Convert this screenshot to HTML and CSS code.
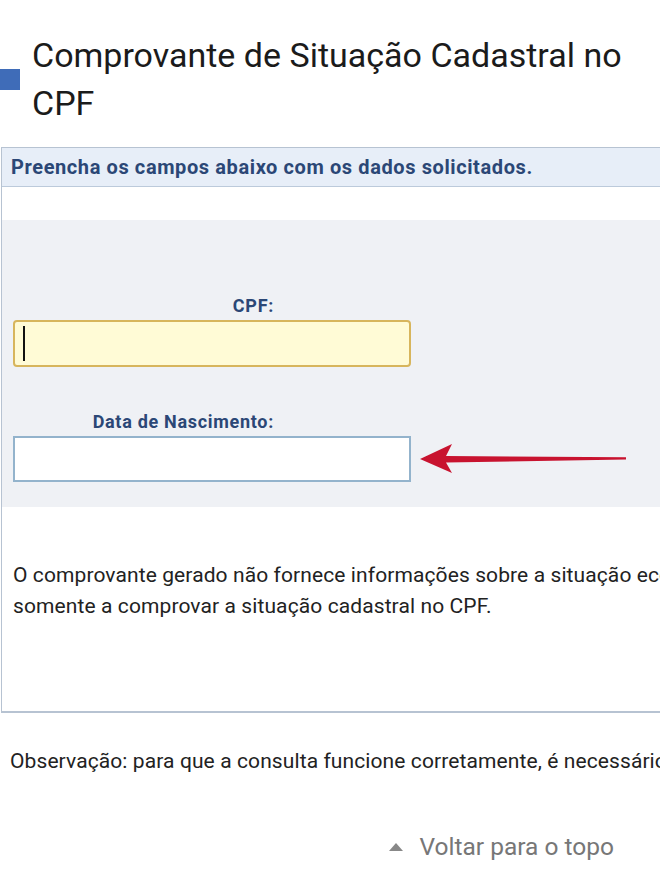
FILE: index.html
```html
<!DOCTYPE html>
<html lang="pt-BR">
<head>
    <meta charset="UTF-8">
    <meta name="viewport" content="width=device-width, initial-scale=1.0">
    <title>Comprovante de Situação Cadastral no CPF</title>
    <link rel="stylesheet" href="styles.css">
</head>
<body>

    <!-- Page title -->
    <div class="page-title">
        <span class="title-mark"></span>
        <h1>Comprovante de Situação Cadastral no CPF</h1>
    </div>

    <!-- Form box -->
    <div class="form-box">
        <div class="form-box-header">Preencha os campos abaixo com os dados solicitados.</div>

        <div class="form-fields">
            <div class="field">
                <label for="txtCPF">CPF:</label>
                <div class="field-row">
                    <div class="input-wrap">
                        <input type="text" id="txtCPF" class="input-active">
                        <span class="text-cursor"></span>
                    </div>
                </div>
            </div>
            <div class="field">
                <label for="txtDataNascimento">Data de Nascimento:</label>
                <div class="field-row">
                    <input type="text" id="txtDataNascimento">
                    <svg class="pointer-arrow" width="212" height="36" viewBox="0 0 212 36">
                        <path d="M2 18 L34 3 L28 15 L208 16.2 L208 18.4 L28 21.5 L34 32 Z" fill="#c8132f"/>
                    </svg>
                </div>
            </div>
        </div>

        <p class="form-note">O comprovante gerado não fornece informações sobre a situação econômico-fiscal do contribuinte, destinando-se<br>somente a comprovar a situação cadastral no CPF.</p>
    </div>

    <p class="obs">Observação: para que a consulta funcione corretamente, é necessário que o navegador esteja com o JavaScript habilitado.</p>

    <div class="back-top">
        <a href="#"><span class="caret"></span>Voltar para o topo</a>
    </div>

</body>
</html>
```

FILE: styles.css
```css
* {
    margin: 0;
    padding: 0;
    box-sizing: border-box;
}

html, body {
    overflow-x: hidden;
}

body {
    font-family: 'Roboto', 'Liberation Sans', sans-serif;
    background-color: #fff;
    color: #222;
    width: 660px;
}

.page-title {
    display: flex;
    align-items: center;
    gap: 12px;
    padding-top: 31px;
}

.title-mark {
    width: 20px;
    height: 21px;
    background-color: #3f6cb8;
    flex-shrink: 0;
}

h1 {
    font-size: 34px;
    font-weight: 400;
    line-height: 48px;
    color: #1b1b1b;
    width: 610px;
}

.form-box {
    margin-top: 20px;
    margin-left: 1px;
    width: 1000px;
    border: 1px solid #b7c3d2;
    border-bottom-width: 2px;
}

.form-box-header {
    height: 39px;
    line-height: 38px;
    padding-left: 9px;
    background-color: #e7eef8;
    border-bottom: 1px solid #bccadb;
    font-size: 20px;
    font-weight: 700;
    letter-spacing: 0.6px;
    color: #2b4776;
    white-space: nowrap;
}

.form-fields {
    margin-top: 33px;
    background-color: #eff1f5;
    padding: 76px 0 25px 11px;
}

.field + .field {
    margin-top: 45px;
}

.field label {
    display: block;
    width: 261px;
    text-align: right;
    font-size: 18px;
    font-weight: 700;
    color: #2b4776;
    line-height: 20px;
    letter-spacing: 0.7px;
    margin-bottom: 4px;
}

.field-row {
    display: flex;
    align-items: center;
}

.input-wrap {
    position: relative;
}

.field input {
    display: block;
    width: 398px;
    height: 46px;
    border: 2px solid #93b3cc;
    background-color: #fff;
    font-size: 18px;
    padding: 0 9px;
    outline: none;
}

.field input.input-active {
    height: 47px;
    background-color: #fffbd6;
    border-color: #d7b55c;
    border-radius: 4px;
}

.text-cursor {
    position: absolute;
    left: 10px;
    top: 6px;
    width: 2px;
    height: 35px;
    background-color: #111;
}

.pointer-arrow {
    margin-left: 7px;
}

.form-note {
    font-size: 21px;
    line-height: 31px;
    letter-spacing: 0.1px;
    padding: 53px 0 89px 11px;
    white-space: nowrap;
    color: #222;
}

.obs {
    font-size: 21px;
    line-height: 31px;
    letter-spacing: 0.1px;
    padding: 33px 0 0 10px;
    white-space: nowrap;
    color: #222;
}

.back-top {
    display: flex;
    justify-content: flex-end;
    padding: 55px 46px 0 0;
}

.back-top a {
    display: flex;
    align-items: center;
    gap: 16px;
    font-size: 24.5px;
    color: #777;
    text-decoration: none;
}

.caret {
    width: 0;
    height: 0;
    border-left: 7.5px solid transparent;
    border-right: 7.5px solid transparent;
    border-bottom: 8px solid #888;
}
```
